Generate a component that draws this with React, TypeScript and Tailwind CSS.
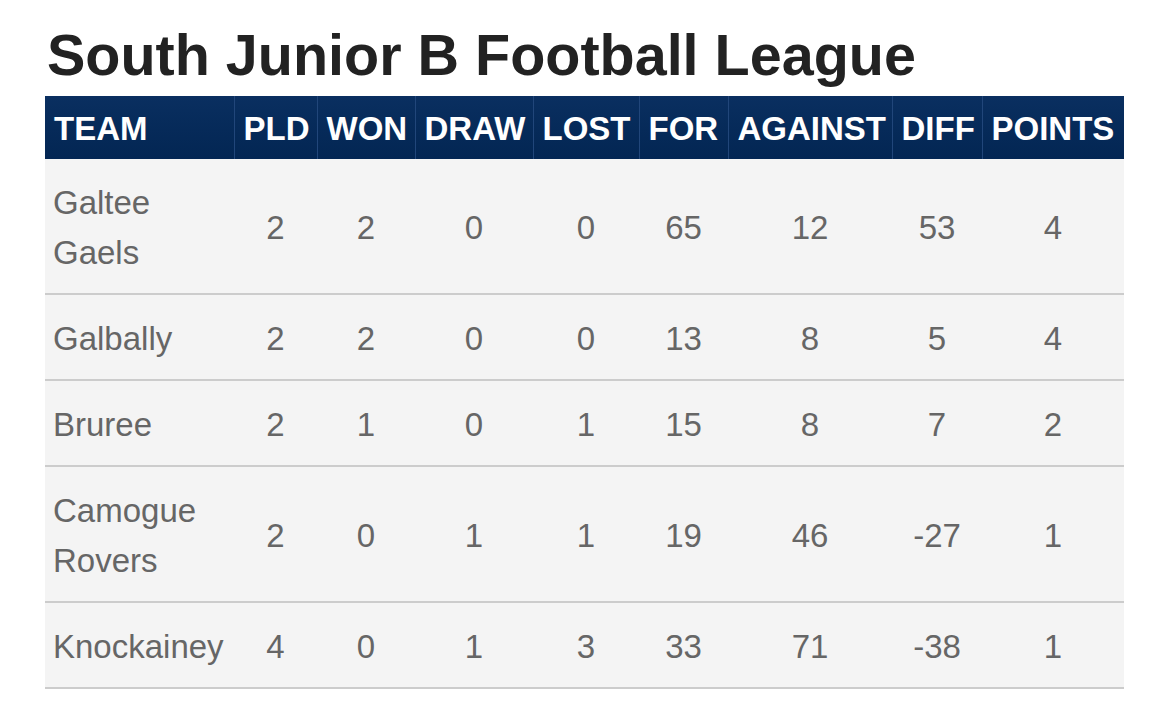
import React from "react";

const cols = [
  { h: "TEAM", w: 189 },
  { h: "PLD", w: 83 },
  { h: "WON", w: 98 },
  { h: "DRAW", w: 118 },
  { h: "LOST", w: 106 },
  { h: "FOR", w: 89 },
  { h: "AGAINST", w: 164 },
  { h: "DIFF", w: 90 },
  { h: "POINTS", w: 142 },
];

const rows: (string | number)[][] = [
  ["Galtee Gaels", 2, 2, 0, 0, 65, 12, 53, 4],
  ["Galbally", 2, 2, 0, 0, 13, 8, 5, 4],
  ["Bruree", 2, 1, 0, 1, 15, 8, 7, 2],
  ["Camogue Rovers", 2, 0, 1, 1, 19, 46, -27, 1],
  ["Knockainey", 4, 0, 1, 3, 33, 71, -38, 1],
];

export default function App() {
  return (
    <div
      className="w-[1170px] h-[723px] bg-white pl-[45px] pt-[23px]"
      style={{ fontFamily: '"Liberation Sans", Arial, sans-serif' }}
    >
      <h1 className="text-[57.5px] leading-[64px] font-bold text-[#222222] pl-[2px] mb-[9px]">
        South Junior B Football League
      </h1>
      <table className="table-fixed border-collapse w-[1079px]">
        <colgroup>
          {cols.map((c) => (
            <col key={c.h} style={{ width: c.w }} />
          ))}
        </colgroup>
        <thead>
          <tr className="h-[63px] bg-gradient-to-b from-[#0a2f60] to-[#032653]">
            {cols.map((c, i) => (
              <th
                key={c.h}
                className={`text-left text-white font-bold text-[33px] leading-[48px] pl-[9px] pr-0 pt-[3px] whitespace-nowrap ${
                  i > 0 ? "border-l border-[#21467a]" : ""
                }`}
              >
                {c.h}
              </th>
            ))}
          </tr>
        </thead>
        <tbody>
          {rows.map((r) => (
            <tr key={r[0] as string} className="bg-[#f4f4f4] border-b-2 border-[#cccccc]">
              {r.map((v, i) => (
                <td
                  key={i}
                  className={`text-[33px] leading-[50px] text-[#666666] pt-[19px] pb-[15px] ${
                    i === 0 ? "text-left pl-[8px] pr-[4px]" : "text-center"
                  }`}
                >
                  {v}
                </td>
              ))}
            </tr>
          ))}
        </tbody>
      </table>
    </div>
  );
}
